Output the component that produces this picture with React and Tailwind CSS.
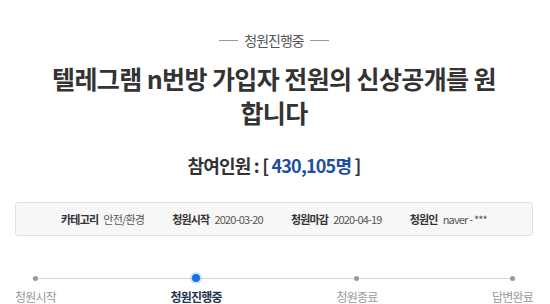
import React from "react";

const steps = [
  { label: "청원시작" },
  { label: "청원진행중", active: true },
  { label: "청원종료" },
  { label: "답변완료" },
];

const details = [
  ["카테고리", "안전/환경"],
  ["청원시작", "2020-03-20"],
  ["청원마감", "2020-04-19"],
  ["청원인", "naver - ***"],
];

const App = () => {
  return (
    <div
      className="w-[550px] h-[304px] bg-white overflow-hidden"
      style={{ fontFamily: '"Noto Sans CJK KR", "Noto Sans", sans-serif' }}
    >
      <div className="ml-[15px] w-[518px] pt-[31px]">
        <div className="flex items-center justify-center gap-[6px] text-[14px] leading-[18px] tracking-[-1px] text-[#555]">
          <span className="w-[19px] h-px bg-[#999]" />
          <span>청원진행중</span>
          <span className="w-[19px] h-px bg-[#999]" />
        </div>

        <h1 className="mt-[12px] text-center text-[25px] font-bold leading-[34px] tracking-[-0.6px] text-[#333]">
          텔레그램 n번방 가입자 전원의 신상공개를 원
          <br />
          합니다
        </h1>

        <p className="mt-[23px] text-center text-[18px] font-bold leading-[26px] tracking-[-0.8px] text-[#333]">
          참여인원 : [ <span className="text-[#1d4f9e]">430,105명</span> ]
        </p>

        <div className="mt-[24px] h-[34px] flex items-center justify-center gap-[28px] bg-[#f7f7f7] border border-[#e0e0e0] rounded-[3px] text-[11px] tracking-[-0.8px]">
          {details.map(([k, v]) => (
            <div key={k} className="flex items-center gap-[5px]">
              <span className="font-bold text-[#333]">{k}</span>
              <span className="text-[#555]">{v}</span>
            </div>
          ))}
        </div>

        <div className="relative mt-[37px]">
          <div className="absolute left-[17px] right-[18px] top-[5px] h-px bg-[#d5d5d5]" />
          <div className="relative flex justify-between">
            {steps.map((s) => (
              <div key={s.label} className="flex flex-col items-center">
                <div className="h-[10px] flex items-center justify-center">
                  {s.active ? (
                    <span className="w-[8px] h-[8px] rounded-full bg-[#1a6fe0] shadow-[0_0_0_2px_rgba(26,111,224,0.2)]" />
                  ) : (
                    <span className="w-[5px] h-[5px] rounded-full bg-[#999]" />
                  )}
                </div>
                <span
                  className={
                    "mt-[6px] text-[12px] leading-[16px] tracking-[-0.8px] " +
                    (s.active ? "font-bold text-[#1f3553]" : "text-[#999]")
                  }
                >
                  {s.label}
                </span>
              </div>
            ))}
          </div>
        </div>
      </div>
    </div>
  );
};

export default App;
